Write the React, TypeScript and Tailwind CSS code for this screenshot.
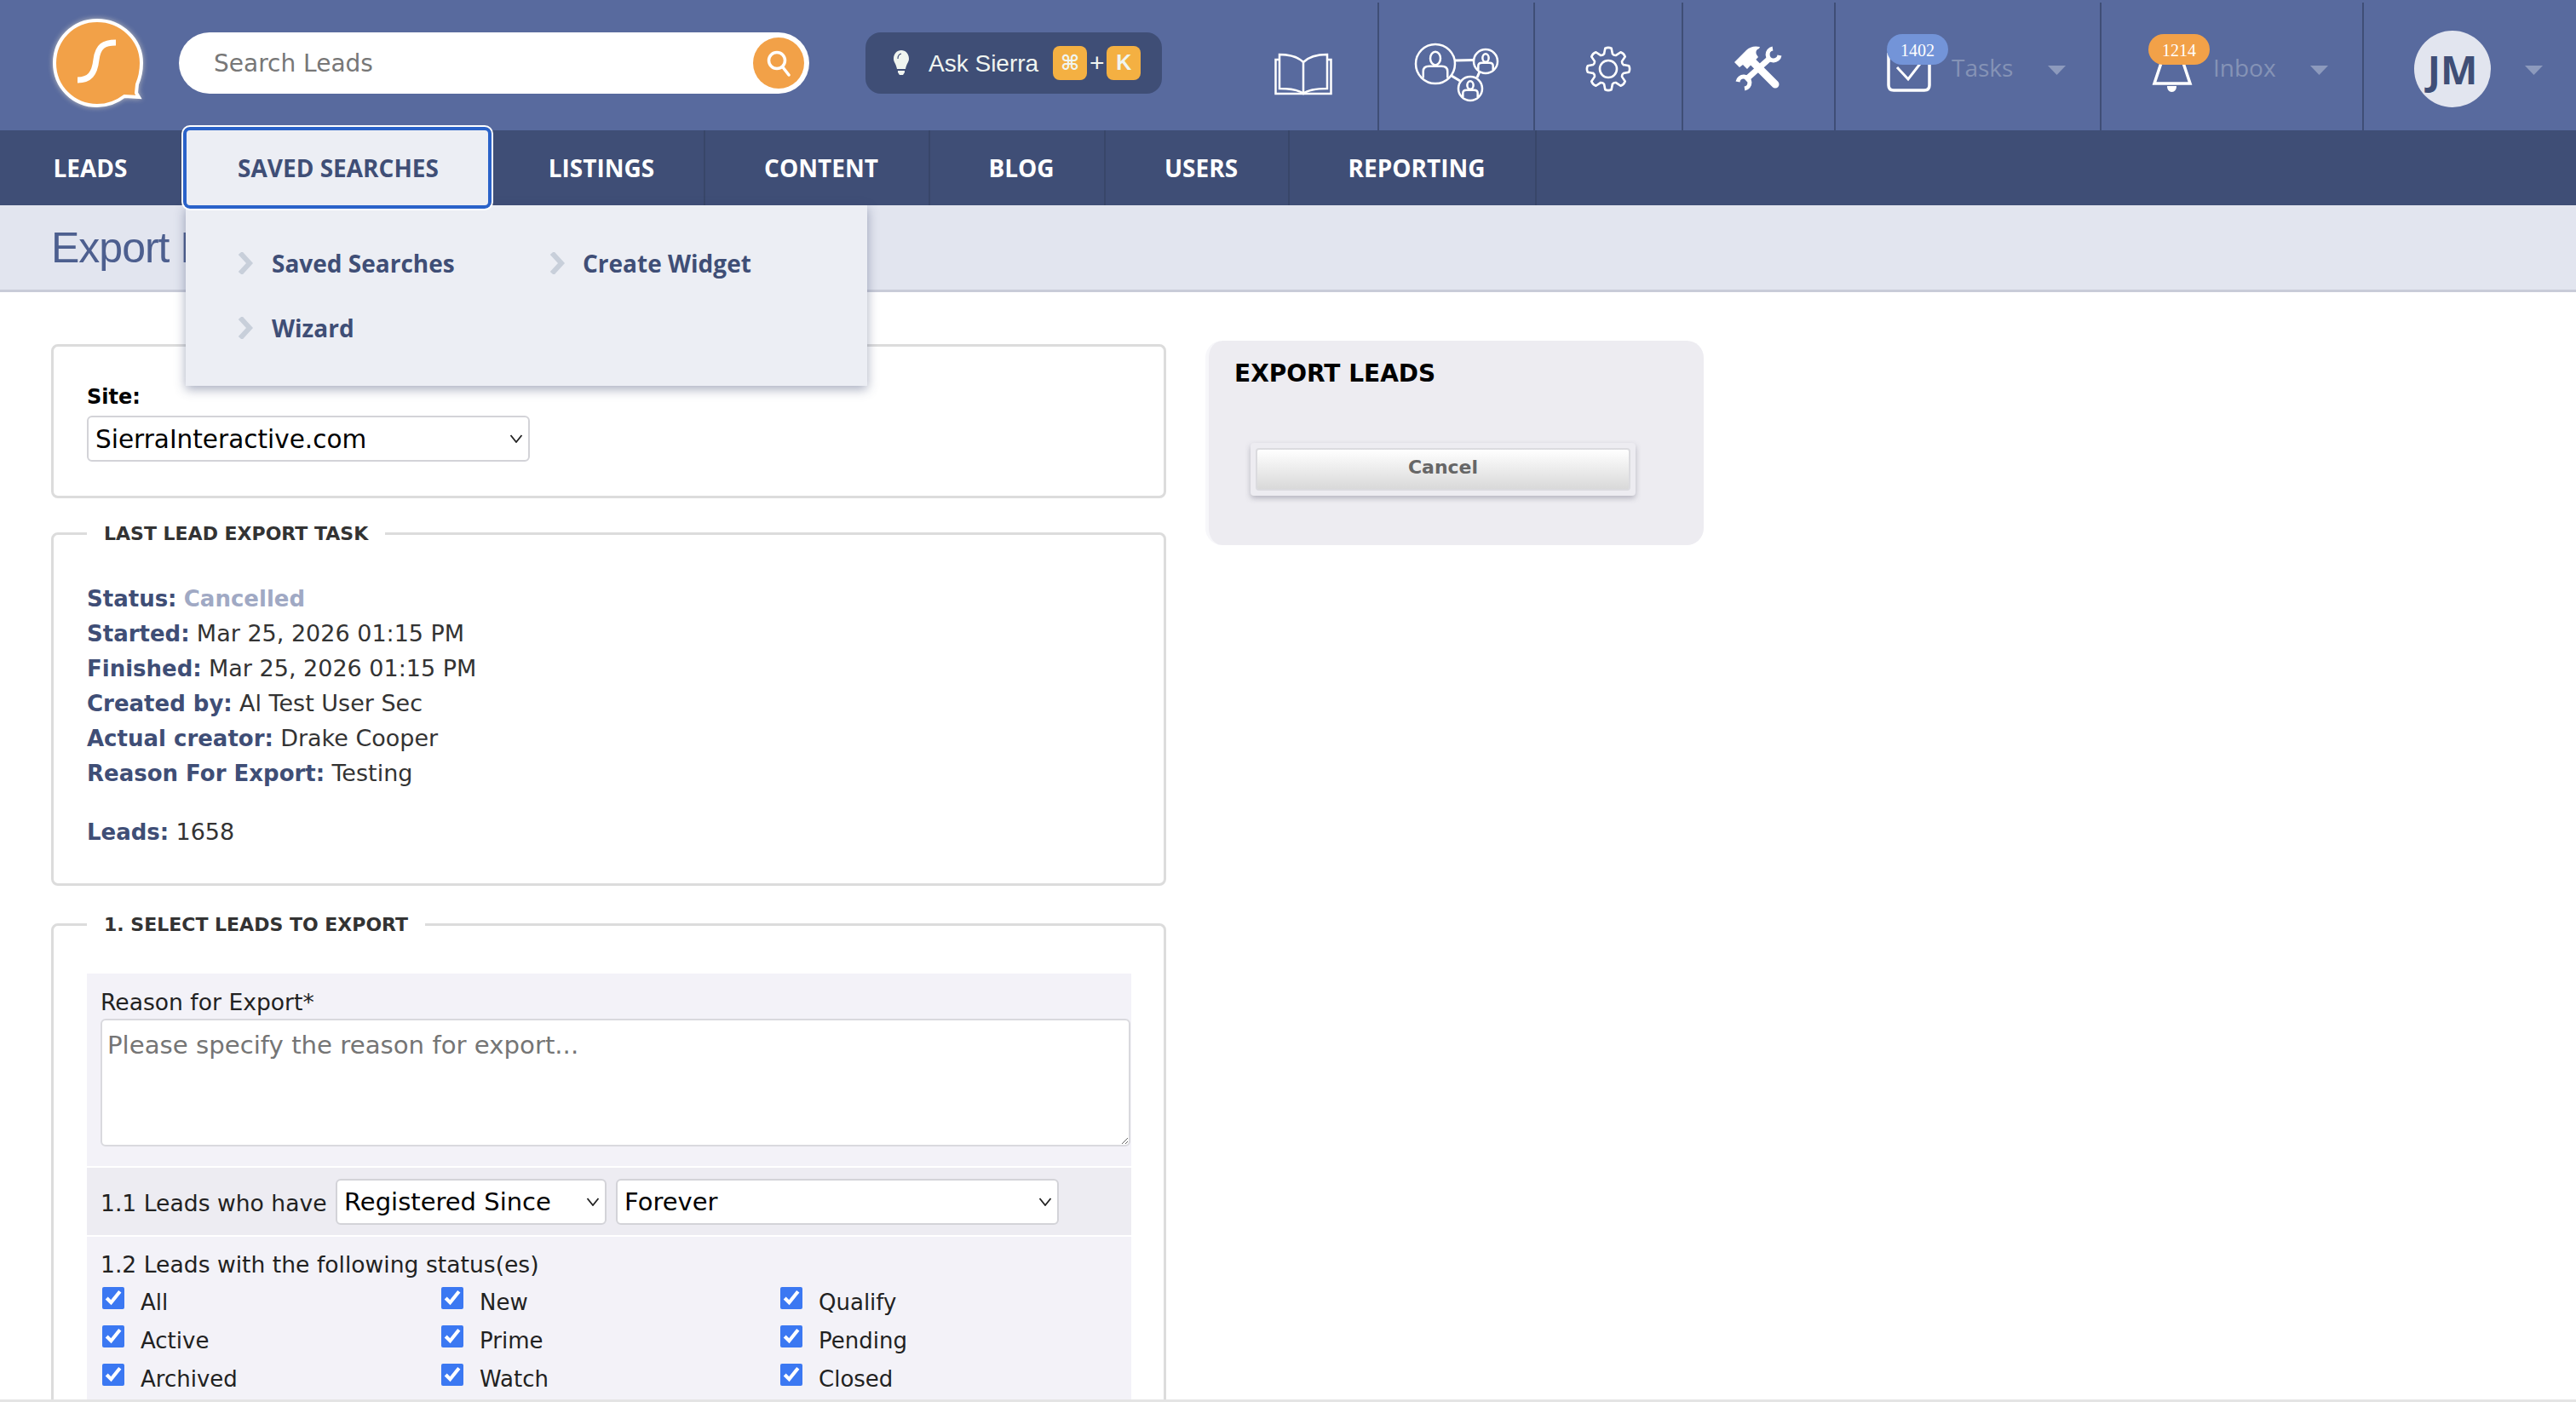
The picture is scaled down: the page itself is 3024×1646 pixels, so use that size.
const navItems = [
  { label: "LEADS", width: "w-[214px]" },
  { label: "SAVED SEARCHES", width: "w-[364px]" },
  { label: "LISTINGS", width: "w-[250px] pl-[8px]" },
  { label: "CONTENT", width: "w-[264px] pl-[10px]" },
  { label: "BLOG", width: "w-[206px] pl-[10px]" },
  { label: "USERS", width: "w-[216px] pl-[10px]" },
  { label: "REPORTING", width: "w-[290px] pl-[10px]" },
];

const statuses = [
  ["All", "New", "Qualify"],
  ["Active", "Prime", "Pending"],
  ["Archived", "Watch", "Closed"],
];

const body = "font-['DejaVu_Sans',sans-serif]";
const openSans = "font-['Open_Sans',sans-serif]";

// gear outline, 8 teeth
const gearPath = Array.from({ length: 8 }, (_, i) => {
  const a = (i * Math.PI) / 4 - Math.PI / 2;
  const pt = (r: number, d: number) =>
    `${(27 + r * Math.cos(a + d)).toFixed(2)} ${(27 + r * Math.sin(a + d)).toFixed(2)}`;
  return `${i === 0 ? "M" : "L"}${pt(18.5, -0.27)}L${pt(24.5, -0.15)}Q${pt(26, 0)} ${pt(24.5, 0.15)}L${pt(18.5, 0.27)}Q${pt(17, 0.39)} ${pt(18.5, 0.52)}`;
}).join("") + "Z";

function Logo() {
  return (
    <svg width="108" height="108" viewBox="0 0 108 108" className="drop-shadow-[0_0_3px_rgba(190,190,190,0.95)]">
      <path
        d="M54 4C26 4 4 26 4 54s22 50 50 50c13 0 23-4 32-11l17 1-3-5 1-10c3-7 5-16 5-25C106 26 82 4 54 4Z"
        fill="#f2a148"
        stroke="#fff"
        strokeWidth="4"
      />
      <path
        d="M76 30c-14 0-21 4-23 20-2 17-8 24-22 24"
        fill="none"
        stroke="#fff"
        strokeWidth="7"
      />
    </svg>
  );
}

function BookIcon() {
  return (
    <svg width="68" height="50" viewBox="0 0 68 50" fill="none" stroke="#fff" strokeWidth="2.5">
      <path d="M34 11C28 5 18 2 6 2v40c12 0 22 1 28 6 6-5 16-6 28-6V2C50 2 40 5 34 11v37" />
      <path d="M6 8H1.5v40h65V8H62" />
    </svg>
  );
}

function Person({ cx, cy, r }: { cx: number; cy: number; r: number }) {
  return (
    <g>
      <circle cx={cx} cy={cy} r={r} />
      <ellipse cx={cx} cy={cy - r * 0.28} rx={r * 0.26} ry={r * 0.34} />
      <path
        d={`M${cx - r * 0.62} ${cy + r * 0.72}v-${r * 0.34}q0-${r * 0.26} ${r * 0.3}-${r * 0.26}h${r * 0.64}q${r * 0.3} 0 ${r * 0.3} ${r * 0.26}v${r * 0.34}`}
      />
    </g>
  );
}

function PeopleIcon() {
  return (
    <svg width="100" height="70" viewBox="0 0 100 70" fill="none" stroke="#fff" strokeWidth="2.5">
      <Person cx={25} cy={25} r={23} />
      <Person cx={84} cy={22} r={14} />
      <Person cx={66} cy={54} r={14} />
      <path d="M48 21l22-.5M77 34l-3 7M44 39l10 6" strokeWidth="3" />
    </svg>
  );
}

function GearIcon() {
  return (
    <svg width="54" height="54" viewBox="0 0 54 54" fill="none" stroke="#fff" strokeWidth="2.600" strokeLinejoin="round">
      <path d={gearPath} />
      <circle cx="27" cy="27" r="10" />
    </svg>
  );
}

function ToolsIcon() {
  return (
    <svg width="58" height="54" viewBox="0 0 58 54" fill="none">
      <path d="M20 17l28 28" stroke="#fff" strokeWidth="9" strokeLinecap="round" />
      <path d="M0 19L14 5Q20-1 30 1L29 3Q24 5 26 10L28 13 15 27 10 22 6 25Z" fill="#fff" />
      <path d="M13 40l28-25" stroke="#fff" strokeWidth="7" />
      <path d="M53 11A7 7 0 1 1 45 3" stroke="#fff" strokeWidth="5" />
      <path d="M4 42A7 7 0 1 1 12 50" stroke="#fff" strokeWidth="5" />
    </svg>
  );
}

function TaskIcon() {
  return (
    <svg width="52" height="48" viewBox="0 0 52 48" fill="none" stroke="#fff">
      <path d="M2 2v38q0 6 6 6h36q6 0 6-6V2" strokeWidth="3.5" />
      <path d="M12 19l13 14 17-22" strokeWidth="3" />
    </svg>
  );
}

function BellIcon() {
  return (
    <svg width="48" height="36" viewBox="0 0 48 36" fill="none">
      <path d="M11 0L3 24h42L37 0" stroke="#fff" strokeWidth="3.5" />
      <path d="M18 27h11c0 4-2 7-5.500 7S18 31 18 27Z" fill="#fff" />
    </svg>
  );
}

function Caret() {
  return (
    <svg width="21" height="11" viewBox="0 0 21 11" className="shrink-0">
      <path d="M0 0h21L10.500 11Z" fill="#8d9abd" />
    </svg>
  );
}

function Chevron() {
  return (
    <svg width="18" height="26" viewBox="0 0 18 26" fill="none" className="shrink-0">
      <path d="M3 1l11 12L3 25" stroke="#c8cfda" strokeWidth="6" />
    </svg>
  );
}

function Select({ label, className }: { label: string; className: string }) {
  return (
    <div className={`relative ${className}`}>
      <select
        defaultValue={label}
        className={`h-full w-full appearance-none rounded-[6px] border-2 border-[#d3d3d8] bg-white pl-[8px] pt-[2px] text-black ${body}`}
      >
        <option>{label}</option>
      </select>
      <svg width="16" height="10" viewBox="0 0 16 10" fill="none" className="pointer-events-none absolute right-[8px] top-[22px]">
        <path d="M1.500 1l6.500 8 6.500-8" stroke="#222" strokeWidth="1.800" />
      </svg>
    </div>
  );
}

function Field({ label, children }: { label: string; children: React.ReactNode }) {
  return (
    <div className="h-[41px] leading-[41px] whitespace-nowrap">
      <b className="text-[#3f4e76]">{label}</b> <span className="text-[27px]">{children}</span>
    </div>
  );
}

export default function App() {
  return (
    <div className={`flex h-[1646px] w-[3024px] flex-col overflow-hidden bg-white ${body}`}>
      <header className="flex h-[153px] shrink-0 bg-[#586a9e]">
        <div className="ml-[60px] mt-[20px] shrink-0">
          <Logo />
        </div>
        <div className="ml-[42px] mt-[38px] flex h-[72px] w-[740px] shrink-0 items-center justify-between rounded-full bg-white pl-[41px] pr-[6px]">
          <span className="pt-[2px] text-[28px] text-[#777]">Search Leads</span>
          <span className="flex h-[60px] w-[60px] items-center justify-center rounded-full bg-[#f2a148]">
            <svg width="30" height="32" viewBox="0 0 30 32" fill="none" stroke="#fff" strokeWidth="3.500">
              <circle cx="13" cy="13" r="9.500" />
              <path d="M20 21l7 9" strokeLinecap="round" />
            </svg>
          </span>
        </div>
        <div className="ml-[66px] mt-[38px] flex h-[72px] w-[348px] shrink-0 items-center rounded-[18px] bg-[#3f4e76] pl-[33px] font-['Liberation_Sans',sans-serif] text-[#f0f5f0]">
          <svg width="18" height="30" viewBox="0 0 18 30" fill="#f0f5f0">
            <path d="M9 0C4 0 0 4 0 10c0 4 3 6 4 12h10c1-6 4-8 4-12 0-6-4-10-9-10Z" />
            <path d="M5 24h8v2l-2 3H7l-2-3Z" />
            <path d="M5 10q0-5 4-6" fill="none" stroke="#3f4e76" strokeWidth="1.200" />
          </svg>
          <span className="ml-[23px] pt-[2px] text-[28px]">Ask Sierra</span>
          <span className="ml-[17px] flex h-[40px] w-[40px] items-center justify-center rounded-[8px] bg-[#f4b042] font-['DejaVu_Sans',sans-serif] text-[24px] font-bold">⌘</span>
          <span className="w-[23px] text-center text-[30px] leading-none">+</span>
          <span className="flex h-[40px] w-[40px] items-center justify-center rounded-[8px] bg-[#f4b042] text-[25px] font-bold">K</span>
        </div>

        <div className="ml-[132px] mt-[62px] shrink-0">
          <BookIcon />
        </div>
        <div className="ml-[53px] mt-[3px] flex h-[150px] w-[183px] shrink-0 items-center justify-center border-l-2 border-[#3f4e76] pt-[14px]">
          <PeopleIcon />
        </div>
        <div className="mt-[3px] flex h-[150px] w-[174px] shrink-0 items-center justify-center border-l-2 border-[#3f4e76] pt-[6px]">
          <GearIcon />
        </div>
        <div className="mt-[3px] flex h-[150px] w-[179px] shrink-0 items-center justify-center border-l-2 border-[#3f4e76] pt-[6px]">
          <ToolsIcon />
        </div>
        <div className="relative mt-[3px] flex h-[150px] w-[312px] shrink-0 items-center border-l-2 border-[#3f4e76] pl-[60px] pt-[6px]">
          <div className="mt-[6px]">
            <TaskIcon />
          </div>
          <span className="absolute left-[60px] top-[37px] flex h-[36px] w-[72px] items-center justify-center rounded-[18px] bg-[#7394d8] pt-[2px] font-['Liberation_Serif',serif] text-[20px] text-white">1402</span>
          <span className={`ml-[24px] -mt-[5px] text-[28px] text-[#8593b6] ${openSans}`}>Tasks</span>
          <span className="ml-[41px] mt-[2px]">
            <Caret />
          </span>
        </div>
        <div className="relative mt-[3px] flex h-[150px] w-[308px] shrink-0 items-center border-l-2 border-[#3f4e76] pl-[59px] pt-[6px]">
          <div className="mt-[22px]">
            <BellIcon />
          </div>
          <span className="absolute left-[55px] top-[37px] flex h-[36px] w-[72px] items-center justify-center rounded-[18px] bg-[#f2a148] pt-[2px] font-['Liberation_Serif',serif] text-[20px] text-white">1214</span>
          <span className={`ml-[24px] -mt-[5px] text-[28px] text-[#8593b6] ${openSans}`}>Inbox</span>
          <span className="ml-[40px] mt-[2px]">
            <Caret />
          </span>
        </div>
        <div className="mt-[3px] flex h-[150px] flex-1 items-center border-l-2 border-[#3f4e76] pl-[59px] pt-[6px]">
          <span className={`flex h-[90px] w-[90px] items-center justify-center rounded-full bg-[#e2e5ef] text-[46px] font-bold text-[#3f4e76] ${openSans}`}>JM</span>
          <span className="ml-[40px] mt-[2px]">
            <Caret />
          </span>
        </div>
      </header>

      <nav className={`relative z-10 flex h-[88px] shrink-0 bg-[#3f4e76] text-[28px] font-bold text-white ${openSans}`}>
        {navItems.map((item) =>
          item.label === "SAVED SEARCHES" ? (
            <div key={item.label} className={`relative shrink-0 ${item.width}`}>
              <div className="absolute left-[4px] top-[88px] h-[212px] w-[800px] bg-[#eceef4] text-[28px] font-bold text-[#3f4e76] shadow-[0_4px_12px_rgba(60,70,110,0.45)]">
                <div className="grid grid-cols-[366px_1fr] pl-[61px] pt-[50px]">
                  <div className="flex h-[35px] items-center gap-[22px]"><Chevron />Saved Searches</div>
                  <div className="flex h-[35px] items-center gap-[21px]"><Chevron />Create Widget</div>
                  <div className="mt-[41px] flex h-[35px] items-center gap-[22px]"><Chevron />Wizard</div>
                </div>
              </div>
              <div className="absolute left-[1px] -top-[4px] z-10 flex h-[96px] w-[362px] items-center justify-center rounded-[8px] border-[4px] border-[#2a62c9] bg-[#eceef4] pl-[2px] text-[#3f4e76] outline-2 outline-white">
                {item.label}
              </div>
            </div>
          ) : (
            <div key={item.label} className={`flex h-full shrink-0 items-center justify-center border-r-2 border-[#384669] ${item.width}`}>
              {item.label}
            </div>
          ),
        )}
      </nav>

      <div className="flex h-[102px] shrink-0 items-center border-b-[3px] border-[#c9ccd8] bg-[#e2e5ef] pl-[60px] pt-[2px] font-['Liberation_Sans',sans-serif] text-[50px] tracking-[-1px] text-[#4d5f8f]">
        Export Leads
      </div>

      <main className="flex min-h-0 flex-1 items-start overflow-hidden pl-[60px]">
        <div className="w-[1309px] shrink-0 pt-[61px]">
          <div className="h-[181px] rounded-[8px] border-[3px] border-[#dcdcdc] pl-[39px] pt-[39px]">
            <div className="mb-[2px] text-[24px] font-bold leading-[40px] text-black">Site:</div>
            <Select label="SierraInteractive.com" className="h-[54px] w-[520px] text-[29.500px]" />
          </div>

          <fieldset className="mt-[25px] h-[430px] rounded-[8px] border-[3px] border-[#dcdcdc] pl-[39px] pt-[39px] text-[26px] text-[#333]">
            <legend className="px-[20px] text-[22px] font-bold text-[#333]">LAST LEAD EXPORT TASK</legend>
            <Field label="Status:"><b className="text-[26px] text-[#a0a9c4]">Cancelled</b></Field>
            <Field label="Started:">Mar 25, 2026 01:15 PM</Field>
            <Field label="Finished:">Mar 25, 2026 01:15 PM</Field>
            <Field label="Created by:">Al Test User Sec</Field>
            <Field label="Actual creator:">Drake Cooper</Field>
            <Field label="Reason For Export:">Testing</Field>
            <div className="mt-[28px]">
              <Field label="Leads:">1658</Field>
            </div>
          </fieldset>

          <fieldset className="mt-[29px] rounded-[8px] border-[3px] border-[#dcdcdc] pl-[39px] pr-[38px] pt-[41px] text-[26.600px] text-[#222]">
            <legend className="px-[20px] text-[22px] font-bold text-[#333]">1. SELECT LEADS TO EXPORT</legend>
            <div className="h-[226px] bg-[#f3f2f8] pl-[16px] pt-[16px]">
              <div className="mb-[2px] leading-[35px]">Reason for Export*</div>
              <textarea
                placeholder="Please specify the reason for export..."
                className="block h-[150px] w-[1209px] rounded-[6px] border-2 border-[#d9d9de] bg-white px-[6px] pt-[12px] text-[29.200px] leading-[34px] placeholder:text-[#757575]"
              />
            </div>
            <div className="mt-[2px] flex h-[79px] items-center bg-[#edecf2] pl-[16px]">
              <span className="w-[276px] shrink-0 whitespace-nowrap pt-[5px]">1.1 Leads who have</span>
              <Select label="Registered Since" className="h-[54px] w-[318px] text-[29px]" />
              <Select label="Forever" className="ml-[11px] h-[54px] w-[520px] text-[29px]" />
            </div>
            <div className="mt-[2px] h-[300px] bg-[#f3f2f8] pl-[16px] pt-[15px]">
              <div className="leading-[36px]">1.2 Leads with the following status(es)</div>
              <div className="mt-[8px] grid grid-cols-[398px_398px_398px] gap-y-[14px] text-[26px]">
                {statuses.flat().map((s) => (
                  <label key={s} className="flex h-[31px] items-start">
                    <input type="checkbox" defaultChecked className="ml-[2px] h-[26px] w-[26px] accent-[#3b78f2]" />
                    <span className="ml-[19px] leading-[36px]">{s}</span>
                  </label>
                ))}
              </div>
            </div>
          </fieldset>
        </div>

        <aside className="ml-[46px] mt-[57px] h-[240px] w-[585px] shrink-0 rounded-[20px] border-l-[4px] border-[#f7f7fa] bg-[#edecf1] pl-[30px] pt-[22px]">
          <h2 className="text-[28px] font-bold leading-[34px] text-black">EXPORT LEADS</h2>
          <div className="ml-[19px] mt-[64px] w-[452px] rounded-[4px] p-[6px] shadow-[0_3px_6px_rgba(80,80,100,0.35)]">
            <button className="block h-[50px] w-full rounded-[4px] border-2 border-[#dbdbdf] bg-linear-to-b from-white to-[#d9d9d9] pb-[6px] text-[22px] font-bold text-[#666]">
              Cancel
            </button>
          </div>
        </aside>
      </main>
      <div className="h-[3px] shrink-0 bg-[#e4e4e4]" />
    </div>
  );
}
